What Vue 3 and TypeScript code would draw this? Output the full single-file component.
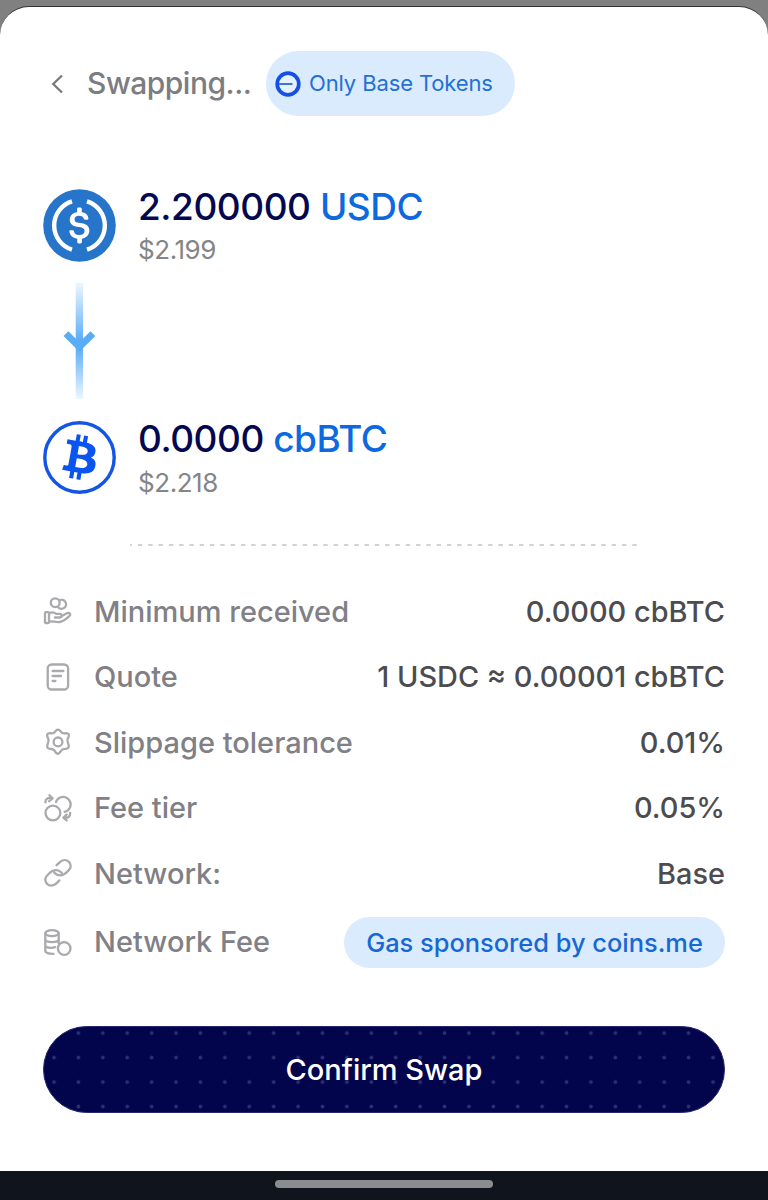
<script setup lang="ts">
interface Token {
  id: 'usdc' | 'cbbtc'
  amount: string
  symbol: string
  fiat: string
}

interface Detail {
  icon: 'receive' | 'quote' | 'slippage' | 'fee' | 'network' | 'gas'
  label: string
  value: string
  pill?: boolean
}

const from: Token = { id: 'usdc', amount: '2.200000', symbol: 'USDC', fiat: '$2.199' }
const to: Token = { id: 'cbbtc', amount: '0.0000', symbol: 'cbBTC', fiat: '$2.218' }

const details: Detail[] = [
  { icon: 'receive', label: 'Minimum received', value: '0.0000 cbBTC' },
  { icon: 'quote', label: 'Quote', value: '1 USDC ≈ 0.00001 cbBTC' },
  { icon: 'slippage', label: 'Slippage tolerance', value: '0.01%' },
  { icon: 'fee', label: 'Fee tier', value: '0.05%' },
  { icon: 'network', label: 'Network:', value: 'Base' },
  { icon: 'gas', label: 'Network Fee', value: 'Gas sponsored by coins.me', pill: true },
]
</script>

<template>
  <div class="screen">
    <main class="sheet">
      <header class="header">
        <svg class="back" viewBox="0 0 14 22" fill="none">
          <path d="M12 2.5 3.2 11 12 19.5" stroke="#77777c" stroke-width="2.2" />
        </svg>
        <h1 class="title">Swapping...</h1>
        <div class="chip">
          <svg class="chip-icon" viewBox="0 0 26 26">
            <circle cx="13" cy="13" r="10.8" fill="#e4f1fe" stroke="#1450e6" stroke-width="3.7" />
            <path d="M4 13h13.5" stroke="#4474d8" stroke-width="2" />
          </svg>
          <span class="chip-text">Only Base Tokens</span>
        </div>
      </header>

      <section class="token">
        <svg class="coin" viewBox="0 0 73 73">
          <circle cx="36.5" cy="36.5" r="36.3" fill="#2775ca" />
          <path d="M29 12.4A25.2 25.2 0 0 0 29 60.6M44 12.4A25.2 25.2 0 0 1 44 60.6" fill="none" stroke="#fff" stroke-width="4.4" />
          <g transform="translate(-2.7 -2.6) scale(2.45)">
            <path fill="#fff" d="M20.022 18.124c0-2.124-1.28-2.852-3.84-3.156-1.828-.243-2.193-.728-2.193-1.578 0-.85.61-1.396 1.828-1.396 1.097 0 1.707.364 2.011 1.275a.458.458 0 00.427.303h.975a.416.416 0 00.427-.425v-.06a3.04 3.04 0 00-2.743-2.489V9.142c0-.243-.183-.425-.487-.486h-.915c-.243 0-.426.182-.487.486v1.396c-1.829.242-2.986 1.456-2.986 2.974 0 2.002 1.218 2.791 3.778 3.095 1.707.303 2.255.668 2.255 1.639 0 .97-.853 1.638-2.011 1.638-1.585 0-2.133-.667-2.316-1.578-.06-.242-.244-.364-.427-.364h-1.036a.416.416 0 00-.426.425v.06c.243 1.518 1.219 2.61 3.23 2.914v1.457c0 .242.183.425.487.485h.915c.243 0 .426-.182.487-.485V21.34c1.829-.303 3.047-1.578 3.047-3.217z" />
          </g>
        </svg>
        <div>
          <p class="amount">{{ from.amount }} <span class="symbol">{{ from.symbol }}</span></p>
          <p class="fiat">{{ from.fiat }}</p>
        </div>
      </section>

      <svg class="arrow" viewBox="0 0 34 118">
        <defs>
          <linearGradient id="shaft" x1="0" y1="0" x2="0" y2="1">
            <stop offset="0" stop-color="#58adf6" stop-opacity="0.1" />
            <stop offset="0.5" stop-color="#58adf6" />
            <stop offset="0.6" stop-color="#58adf6" stop-opacity="0.9" />
            <stop offset="1" stop-color="#58adf6" stop-opacity="0.1" />
          </linearGradient>
        </defs>
        <rect x="12.7" y="1" width="7.4" height="116" fill="url(#shaft)" />
        <path d="M2.9 51.6 16.4 65 29.9 51.6" fill="none" stroke="#58adf6" stroke-width="6.8" />
      </svg>

      <section class="token to">
        <svg class="coin" viewBox="0 0 73 73">
          <circle cx="36.5" cy="36.5" r="34.7" fill="#fff" stroke="#1456e4" stroke-width="3.4" />
          <g transform="translate(36.3 35.8) rotate(-4) scale(2.3) translate(-16 -15.9)">
            <path fill="#0a55f0" d="M23.189 14.02c.314-2.096-1.283-3.223-3.465-3.975l.708-2.84-1.728-.43-.69 2.765c-.454-.114-.92-.22-1.385-.326l.695-2.783L15.596 6l-.708 2.839c-.376-.086-.746-.17-1.104-.26l.002-.009-2.384-.595-.46 1.846s1.283.294 1.256.312c.7.175.826.638.805 1.006l-.806 3.235c.048.012.11.03.18.057l-.183-.045-1.13 4.532c-.086.212-.303.531-.793.41.018.025-1.256-.313-1.256-.313l-.858 1.978 2.25.561c.418.105.828.215 1.231.318l-.715 2.872 1.727.43.708-2.84c.472.127.93.245 1.378.357l-.706 2.828 1.728.43.715-2.866c2.948.558 5.164.333 6.097-2.333.752-2.146-.037-3.385-1.588-4.192 1.13-.26 1.98-1.003 2.207-2.538zm-3.95 5.538c-.533 2.147-4.148.986-5.32.695l.95-3.805c1.172.293 4.929.872 4.37 3.11zm.535-5.569c-.487 1.953-3.495.96-4.47.717l.86-3.45c.975.243 4.118.696 3.61 2.733z" />
          </g>
        </svg>
        <div>
          <p class="amount">{{ to.amount }} <span class="symbol">{{ to.symbol }}</span></p>
          <p class="fiat">{{ to.fiat }}</p>
        </div>
      </section>

      <svg class="divider" viewBox="0 0 508 2">
        <path d="M0 1h508" stroke="#c3c3c6" stroke-width="1.6" stroke-dasharray="4.4 5.9" stroke-dashoffset="2.4" />
      </svg>

      <dl class="details">
        <div v-for="d in details" :key="d.icon" class="row" :class="'row-' + d.icon">
          <svg class="icon" viewBox="0 0 30 30">
            <template v-if="d.icon === 'receive'">
              <circle cx="12.2" cy="6.7" r="4.4" />
              <path d="M16.3 4.4a4.5 4.5 0 1 1-1.2 6.8" />
              <rect x="2" y="16.2" width="4" height="11" rx="1" />
              <path d="M6 17.6c2.6-1.8 5-1.6 7.2.3h3.3c3 0 2.8 3.6 0 3.6h-4.6M18 20.4l5.8-3.2c2.7-1.2 4.4 1.2 2.5 3-2.9 2.8-6.4 5.4-9.8 5.8-3.5.4-6.6-.8-10.5-.7" />
            </template>
            <template v-else-if="d.icon === 'quote'">
              <rect x="4.7" y="2.5" width="20.4" height="25" rx="4" />
              <path d="M9.6 9h10.8M9.6 14h8.4M9.6 19h2.8" />
            </template>
            <template v-else-if="d.icon === 'slippage'">
              <path d="M12.4 4.3Q15 1 17.6 4.3q1.6 2.3 4.2 2l1.2-.1q4 .1 2.5 3.8l-.6 1.2q-1.1 2.2 0 4.6l.7 2.2q1 3.3-2.5 3.8l-1.3.1q-2.6 0-4.2 2.5Q15 28.8 12.4 25q-1.6-3-4.2-3l-1.3-.1q-3.5-.5-2.5-3.8l.7-2.2q1.1-2.4 0-4.6l-.6-1.2Q3 6.3 7 6.2l1.2.1q2.6.3 4.2-2z" />
              <circle cx="15" cy="14.9" r="4.4" />
            </template>
            <template v-else-if="d.icon === 'fee'">
              <circle cx="9.9" cy="20" r="7.4" />
              <path d="M13 9a7.5 7.5 0 1 1 8.6 9.8" />
              <path d="M2.4 9.4C2.5 5.8 4.6 4.3 9 5.2M6.4 2.2 9.6 5.4 6.2 8.2" />
              <path d="M27.2 19.8c.2 4-2.2 5.6-6.4 4.9M23.6 21.6l-3.2 3 3.3 2.9" />
            </template>
            <template v-else-if="d.icon === 'network'">
              <path d="M13.6 7.2 16.6 4.3c2.900-2.700 6.700-3 9.300-.5s2.400 6-.5 8.800l-2.700 2.600c-3.100 2.900-7.500 2.900-10.300.5-.6-.5-1-1-1.300-1.500" />
              <path d="M16.400 22.400 13.400 25.300c-2.900 2.700-6.700 3-9.300.5s-2.400-6 .5-8.800l2.700-2.600c3.100-2.900 7.500-2.900 10.300-.5.6.5 1 1 1.300 1.500" />
            </template>
            <template v-else>
              <ellipse cx="9" cy="5.2" rx="6.7" ry="3" />
              <path d="M2.3 5.2v17.6c0 2 3.7 3.2 8.2 3M15.7 5.2v10.2M2.3 11.2c0 3.8 13.4 3.8 13.4 0M2.3 17.2c0 2.4 6 3.3 9.7 2" />
              <circle cx="21.2" cy="20.5" r="6.3" />
            </template>
          </svg>
          <dt class="label">{{ d.label }}</dt>
          <dd class="value" :class="{ pill: d.pill }">{{ d.value }}</dd>
        </div>
      </dl>

      <button class="confirm" type="button">Confirm Swap</button>
    </main>
    <footer class="nav"><span class="handle"></span></footer>
  </div>
</template>

<style>
html,
body {
  margin: 0;
  background: #808080;
}
</style>

<style scoped>
.screen {
  width: 768px;
  height: 1200px;
  box-sizing: border-box;
  padding-top: 6px;
  background: #808080;
  display: flex;
  flex-direction: column;
  overflow: hidden;
  font-family: Inter, "Liberation Sans", sans-serif;
  font-weight: 500;
}
.sheet {
  flex: 1;
  box-sizing: border-box;
  border-top: 1.5px solid #303030;
  border-radius: 29px 29px 0 0;
  background: #fff;
  padding: 44px 43px 0;
  display: flex;
  flex-direction: column;
  align-items: flex-start;
}
p, h1, dl, dd { margin: 0; }
.header {
  display: flex;
  align-items: center;
  height: 65px;
  padding-left: 7px;
}
.back { width: 14px; height: 22px; margin-top: 1px; }
.title {
  width: 178px;
  margin-left: 23px;
  padding-bottom: 2px;
  font-size: 30px;
  font-weight: 500;
  letter-spacing: -0.5px;
  line-height: 40px;
  color: #7c7c82;
  white-space: nowrap;
}
.chip {
  display: flex;
  align-items: center;
  box-sizing: border-box;
  margin-left: 1px;
  width: 249px;
  height: 65px;
  padding-left: 9px;
  gap: 8px;
  border-radius: 33px;
  background: #d9ebfd;
  color: #2470d4;
  font-size: 22px;
  font-weight: 400;
  letter-spacing: -0.13px;
  white-space: nowrap;
}
.chip-icon { width: 26px; height: 26px; }
.chip-text { padding-bottom: 2px; }
.token {
  display: flex;
  gap: 22px;
  height: 73px;
  margin-top: 73px;
}
.coin { width: 73px; height: 73px; }
.amount {
  margin-top: -5px;
  font-size: 37px;
  letter-spacing: -0.47px;
  line-height: 46px;
  color: #040850;
  white-space: nowrap;
}
.symbol { color: #0d69e0; }
.fiat {
  margin-top: 4px;
  font-size: 26px;
  font-weight: 400;
  letter-spacing: -0.45px;
  line-height: 32px;
  color: #858588;
}
.to .fiat { margin-top: 5px; }
.arrow { width: 34px; height: 118px; margin: 20px 0 0 20px; }
.arrow + .token { margin-top: 21px; }
.divider { width: 508px; height: 2px; margin: 50px 0 0 87px; }
.details {
  width: 682px;
  margin-top: 32.4px;
}
.row {
  display: flex;
  align-items: center;
  height: 65.5px;
}
.icon {
  width: 30px;
  height: 30px;
  fill: none;
  stroke: #aaaaae;
  stroke-width: 2.3;
  stroke-linecap: round;
  stroke-linejoin: round;
}
.label {
  margin-left: 21px;
  font-size: 29px;
  color: #808086;
  white-space: nowrap;
}
.value {
  margin-left: auto;
  font-size: 28.9px;
  color: #4c4c50;
  white-space: nowrap;
}
.row-gas { height: 74.2px; }
.row-gas .label { padding-bottom: 2px; }
.pill {
  box-sizing: border-box;
  width: 381px;
  height: 51px;
  border-radius: 26px;
  background: #d9ebfd;
  color: #1768d4;
  font-size: 25.4px;
  line-height: 51px;
  text-align: center;
}
.confirm {
  width: 682px;
  height: 87px;
  margin-top: 45.9px;
  padding: 0;
  border: 1px solid #24296f;
  border-radius: 44px;
  background-color: #02054c;
  background-image: radial-gradient(circle, #2b3070 1.4px, rgba(43, 48, 112, 0) 2.3px);
  background-size: 24.42px 24.5px;
  background-position: -2.2px -6.2px;
  color: #fff;
  font-family: inherit;
  font-size: 29px;
  font-weight: 500;
}
.nav {
  height: 29px;
  background: #10141d;
  display: flex;
  justify-content: center;
  align-items: flex-start;
}
.handle {
  width: 218px;
  height: 8px;
  margin-top: 9px;
  border-radius: 4px;
  background: #8b8c90;
}
</style>
